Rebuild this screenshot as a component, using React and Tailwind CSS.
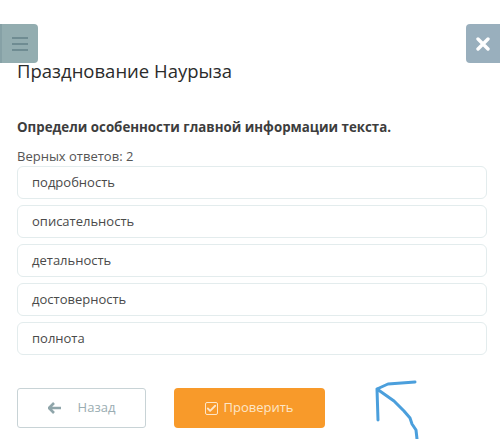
import { Check } from "lucide-react";

const options = ["подробность", "описательность", "детальность", "достоверность", "полнота"];

export default function App() {
  return (
    <div className="relative w-[500px] h-[439px] overflow-hidden bg-white font-['Open_Sans',sans-serif] text-[#3a3a3a]">
      {/* Top buttons */}
      <div className="flex justify-between pt-[24px]">
        <button className="w-[38px] h-[39px] rounded-r-[4px] bg-[#93adb0] border-l-[2px] border-[#86a1a6] flex flex-col items-center justify-center gap-[4px]">
          <span className="block w-[16px] h-[2px] bg-[#6f8c92]" />
          <span className="block w-[16px] h-[2px] bg-[#6f8c92]" />
          <span className="block w-[16px] h-[2px] bg-[#6f8c92]" />
        </button>
        <button className="w-[34px] h-[39px] rounded-l-[4px] bg-[#99afbd] flex items-center justify-center">
          <svg width="14" height="14" viewBox="0 0 14 14">
            <path d="M2 2 L12 12 M12 2 L2 12" stroke="white" strokeWidth="3.4" strokeLinecap="round" />
          </svg>
        </button>
      </div>

      <div className="px-[17px] -mt-[2px]">
        <h1 className="text-[18.5px] leading-[20px] text-[#2b2b2b]">Празднование Наурыза</h1>
        <p className="mt-[37px] text-[13.3px] leading-[18px] font-bold text-[#3d3d3d]">Определи особенности главной информации текста.</p>
        <p className="mt-[11px] text-[13px] leading-[18px] text-[#555]">Верных ответов: 2</p>

        <div className="mt-[1px] flex flex-col gap-[6px] w-[470px]">
          {options.map((o) => (
            <div
              key={o}
              className="h-[33px] flex items-center px-[14px] rounded-[6px] border border-[#e3eced] bg-white text-[13px] text-[#4a4a4a]"
            >
              {o}
            </div>
          ))}
        </div>

        <div className="mt-[33px] flex gap-[28px]">
          <button className="w-[129px] h-[40px] rounded-[3px] border border-[#c8d3d6] bg-white flex items-center justify-center gap-[16px] text-[13px] text-[#9aadb2]">
            <svg width="14" height="12" viewBox="0 0 14 12">
              <path d="M6 1 L1 6 L6 11 M1.5 6 H13" stroke="#8fa5aa" strokeWidth="2.6" fill="none" strokeLinejoin="round" />
            </svg>
            Назад
          </button>
          <button className="w-[151px] h-[40px] rounded-[4px] bg-[#f89a2a] flex items-center justify-center gap-[5px] text-[13px] text-[#fde6c8]">
            <span className="w-[13px] h-[13px] rounded-[2px] border-[1.5px] border-[#fde6c8] flex items-center justify-center">
              <Check size={11} strokeWidth={4} color="#fde6c8" />
            </span>
            Проверить
          </button>
        </div>
      </div>

      {/* hand-drawn arrow */}
      <svg className="absolute left-0 top-0" width="500" height="439" viewBox="0 0 500 439">
        <path
          d="M417 439 L416 430 L412 424 L410 418 L404 411 L394 401 L377 389 M377 389 L378 420 M377 389 L388 384 L415 382"
          stroke="#4b9fdc"
          strokeWidth="3"
          fill="none"
          strokeLinecap="round"
          strokeLinejoin="round"
        />
      </svg>
    </div>
  );
}
